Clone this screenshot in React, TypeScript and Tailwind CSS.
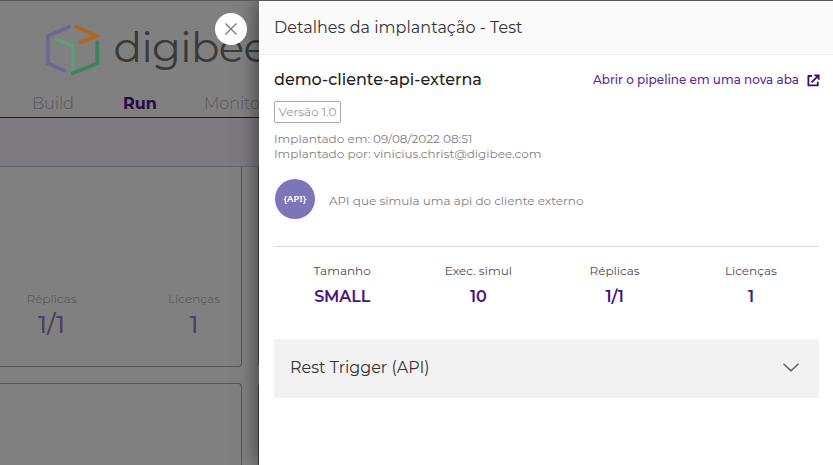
import React from "react";

function Logo() {
  return (
    <svg className="shrink-0" width="55" height="53" viewBox="0 0 55 53" fill="none" strokeWidth="3.8" strokeLinecap="round" strokeLinejoin="miter">
      <path d="M24.3 2.8 3 12V39.5L19.5 46.5" stroke="#6b6796" />
      <path d="M31 2.8 51.5 12 35.7 18.4" stroke="#b1661f" />
      <path d="M11.5 15.3 28 22.2V49" stroke="#5f9c7b" />
      <path d="M28 49 52.3 39.5V18.2" stroke="#3d8064" />
    </svg>
  );
}

function ExternalIcon() {
  return (
    <svg width="13" height="13" viewBox="0 0 13 13" fill="none" stroke="#3f0c73" strokeWidth="1.8">
      <path d="M5 2H1.4V11.4H10.8V7.7" strokeLinejoin="round" />
      <path d="M4.6 8.4 11 2M7.3 1.3H11.7V5.7" />
    </svg>
  );
}

function Stat({ label, value }: { label: string; value: string }) {
  return (
    <div className="flex flex-1 flex-col items-center whitespace-nowrap">
      <span className="text-[12px] leading-4 text-[#4d4d4d]">{label}</span>
      <span className="mt-2 text-[16px] font-semibold leading-5 tracking-[-0.1px] text-[#4a1480]">{value}</span>
    </div>
  );
}

function PageBehind() {
  return (
    <div className="h-[465px] w-[259px] overflow-hidden bg-[#808080]">
      <header className="flex h-[118px] flex-col border-b border-[#2d0a45]">
        <div className="flex h-[88px] shrink-0 pl-[45px] pt-6">
          <Logo />
          <span className="-mt-[3px] ml-[13.5px] text-[42px] font-normal leading-[52px] tracking-[-0.6px] text-[#3a3a3a]">digibee</span>
        </div>
        <nav className="flex whitespace-nowrap pl-8 pt-[6px] text-[16px] font-light leading-5 text-[#585858]">
          <span className="w-[91px] shrink-0">Build</span>
          <span className="w-[81px] shrink-0 font-bold text-[#2d0745]">Run</span>
          <span className="shrink-0">Monitor</span>
        </nav>
      </header>
      <div className="h-[49px] border-b border-[#666] bg-[#7c797f]" />
      <div className="flex">
        <div className="flex h-[200px] w-[242px] shrink-0 items-start whitespace-nowrap rounded-br-[4px] border-b border-r border-[#555] pt-[124px] text-[#5c5c5c]">
          <div className="flex w-[103px] shrink-0 flex-col items-center">
            <span className="text-[12px] leading-4">Réplicas</span>
            <span className="mt-[2px] text-[24px] font-medium leading-8 text-[#4f4162]">1/1</span>
          </div>
          <div className="ml-[40px] flex w-[102px] shrink-0 flex-col items-center">
            <span className="text-[12px] leading-4">Licenças</span>
            <span className="mt-[2px] text-[24px] font-medium leading-8 text-[#4f4162]">1</span>
          </div>
        </div>
        <div className="ml-4 h-[200px] w-1 shrink-0 rounded-bl-[4px] border-b border-l border-[#444]" />
      </div>
      <div className="mt-4 flex">
        <div className="h-[90px] w-[242px] shrink-0 rounded-tr-[4px] border-r border-t border-[#555]" />
        <div className="ml-4 h-[90px] w-1 shrink-0 rounded-tl-[4px] border-l border-t border-[#444]" />
      </div>
    </div>
  );
}

export default function App() {
  return (
    <div className="relative flex h-[465px] w-[833px] overflow-hidden bg-white font-['Montserrat','Inter',sans-serif]">
      <PageBehind />
      <aside className="relative flex h-[465px] w-[574px] flex-col bg-white shadow-[0_0_20px_rgba(0,0,0,0.6)]">
        <div className="flex h-[55px] shrink-0 items-center border-b border-[#f0f0f0] bg-[#fafafa] pl-[15px] pt-px">
          <h1 className="text-[16px] font-normal leading-5 tracking-[0.04px] text-[#333]">Detalhes da implantação - Test</h1>
        </div>
        <div className="flex flex-col pl-[15px] pr-[14px]">
          <div className="mt-[15px] flex h-5 items-center justify-between">
            <h2 className="text-[16px] font-medium leading-5 text-[#222]">demo-cliente-api-externa</h2>
            <a className="-mr-px flex items-center gap-2 text-[12px] font-medium leading-4 text-[#5c2b92]">
              Abrir o pipeline em uma nova aba
              <ExternalIcon />
            </a>
          </div>
          <span className="mt-[11px] flex h-[22px] w-[67px] items-center justify-center rounded-[2px] border border-[#aaa] text-[12px] text-[#999]">Versão 1.0</span>
          <div className="mt-2 text-[12px] leading-[15px] text-[#808080]">
            <p>Implantado em: 09/08/2022 08:51</p>
            <p>Implantado por: vinicius.christ@digibee.com</p>
          </div>
          <div className="mt-[17px] flex h-[42px] items-center">
            <span className="ml-px flex h-10 w-10 items-center justify-center rounded-full bg-[#7c76b8] font-['Noto_Sans',sans-serif] text-[9.5px] font-semibold text-white">{"{API}"}</span>
            <span className="ml-[14px] mt-[3px] text-[12px] leading-4 text-[#808080]">API que simula uma api do cliente externo</span>
          </div>
          <div className="mt-[26px] flex h-[93px] border-t border-[#ddd] pt-4">
            <Stat label="Tamanho" value="SMALL" />
            <Stat label="Exec. simul" value="10" />
            <Stat label="Réplicas" value="1/1" />
            <Stat label="Licenças" value="1" />
          </div>
          <div className="flex h-[59px] items-center justify-between bg-[#f2f2f2] pl-4 pr-5">
            <span className="-mt-px text-[16px] leading-5 text-[#333]">Rest Trigger (API)</span>
            <svg className="-mt-[3px]" width="16" height="9" viewBox="0 0 16 9" fill="none" stroke="#555" strokeWidth="1.2">
              <path d="M0.5 0.7 8 7.8 15.5 0.7" />
            </svg>
          </div>
        </div>
      </aside>
      <div className="absolute inset-x-0 top-0 h-px bg-[#58545a]" />
      <button className="absolute left-[215px] top-[13px] flex h-8 w-8 items-center justify-center rounded-full bg-white">
        <svg width="12" height="12" viewBox="0 0 12 12" stroke="#777" strokeWidth="1.2">
          <path d="M0.5 0.5 11.5 11.5M11.5 0.5 0.5 11.5" />
        </svg>
      </button>
    </div>
  );
}
